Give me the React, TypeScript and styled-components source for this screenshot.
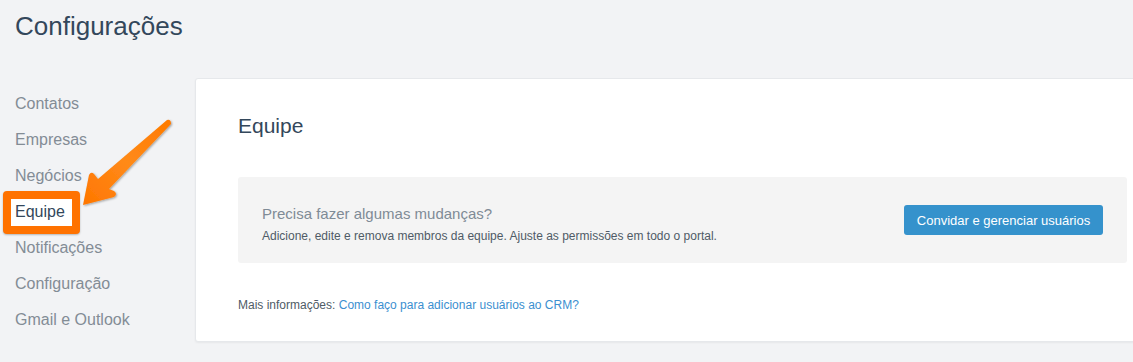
import React from 'react'
import styled, { createGlobalStyle } from 'styled-components'

const GlobalStyle = createGlobalStyle`
    html, body {
        margin: 0;
        padding: 0;
        background: #f2f3f5;
        overflow: hidden;
    }
    body {
        font-family: 'Liberation Sans', Arial, sans-serif;
        color: #33475b;
    }
`

const Page = styled.div`
    position: relative;
    width: 1133px;
    height: 362px;
    overflow: hidden;
`

const Title = styled.h1`
    margin: 0;
    padding: 10px 15px 0;
    height: 78px;
    box-sizing: border-box;
    font-size: 26px;
    font-weight: 400;
    line-height: 32px;
    color: #33475b;
`

const Main = styled.div`
    display: flex;
    align-items: flex-start;
`

const Sidebar = styled.nav`
    width: 195px;
    flex: none;
    padding-top: 8px;
`

const NavItem = styled.div<{ active?: boolean }>`
    position: relative;
    padding-left: 15px;
    height: 36px;
    line-height: 36px;
    font-size: 16px;
    color: ${(props) => (props.active ? '#33475b' : '#838c95')};
    z-index: 1;

    ${(props) =>
        props.active &&
        `
        &:before {
            content: '';
            position: absolute;
            left: 3px;
            top: -3px;
            width: 77px;
            height: 43px;
            box-sizing: border-box;
            border: 8px solid #ff7200;
            border-radius: 4px;
            background: #fff;
            z-index: -1;
            box-shadow: 0 1px 2px rgba(0, 0, 0, 0.25);
        }
    `}
`

const Card = styled.section`
    flex: none;
    width: 975px;
    height: 264px;
    box-sizing: border-box;
    background: #fff;
    border: 1px solid #e6e8eb;
    border-radius: 3px;
    box-shadow: 0 1px 2px rgba(0, 0, 0, 0.05);
    padding: 34px 42px 0;
`

const CardTitle = styled.h2`
    margin: 0;
    font-size: 21px;
    font-weight: 400;
    line-height: 26px;
    color: #33475b;
`

const Notice = styled.div`
    margin-top: 38px;
    height: 86px;
    box-sizing: border-box;
    background: #f4f4f4;
    border-radius: 3px;
    display: flex;
    align-items: center;
    justify-content: space-between;
    padding: 0 24px;
`

const NoticeText = styled.div`
    display: flex;
    flex-direction: column;
    gap: 5px;
    padding-top: 8px;
`

const NoticeTitle = styled.div`
    font-size: 15px;
    line-height: 18px;
    color: #7f8b96;
`

const NoticeSub = styled.div`
    font-size: 12px;
    line-height: 16px;
    color: #4f5b66;
`

const Button = styled.button`
    font-family: 'Liberation Sans', Arial, sans-serif;
    font-size: 13px;
    color: #fff;
    background: #3592cc;
    border: none;
    border-radius: 3px;
    width: 199px;
    height: 30px;
    padding: 0;
    cursor: pointer;
`

const MoreInfo = styled.p`
    margin: 34px 0 0;
    font-size: 12px;
    line-height: 16px;
    color: #4f5b66;
`

const Link = styled.a`
    color: #3b8fd0;
    text-decoration: none;
`

const Arrow = styled.svg`
    position: absolute;
    left: 0;
    top: 0;
    pointer-events: none;
    z-index: 2;
`

const navItems = [
    'Contatos',
    'Empresas',
    'Negócios',
    'Equipe',
    'Notificações',
    'Configuração',
    'Gmail e Outlook',
]

export default function App() {
    return (
        <>
            <GlobalStyle />
            <Page>
                <Title>Configurações</Title>
                <Main>
                    <Sidebar>
                        {navItems.map((item) => (
                            <NavItem key={item} active={item === 'Equipe'}>
                                {item}
                            </NavItem>
                        ))}
                    </Sidebar>
                    <Card>
                        <CardTitle>Equipe</CardTitle>
                        <Notice>
                            <NoticeText>
                                <NoticeTitle>Precisa fazer algumas mudanças?</NoticeTitle>
                                <NoticeSub>
                                    Adicione, edite e remova membros da equipe. Ajuste as
                                    permissões em todo o portal.
                                </NoticeSub>
                            </NoticeText>
                            <Button>Convidar e gerenciar usuários</Button>
                        </Notice>
                        <MoreInfo>
                            Mais informações:{' '}
                            <Link href="#">Como faço para adicionar usuários ao CRM?</Link>
                        </MoreInfo>
                    </Card>
                </Main>
                <Arrow width="200" height="240" viewBox="0 0 200 240">
                    <defs>
                        <linearGradient id="arrowFill" x1="0" y1="1" x2="1" y2="0">
                            <stop offset="0" stopColor="#ff7600" />
                            <stop offset="0.5" stopColor="#ff8a18" />
                            <stop offset="1" stopColor="#ff7a00" />
                        </linearGradient>
                        <filter id="arrowShadow" x="-20%" y="-20%" width="140%" height="140%">
                            <feDropShadow dx="1" dy="1" stdDeviation="1" floodColor="#000" floodOpacity="0.35" />
                        </filter>
                    </defs>
                    <path
                        d="M83 205 L89 175 Q91 171 94 174 L98 179 L167 120 Q171 119 171 124 L109 189 L114 191 Q118 194 114 197 Z"
                        fill="url(#arrowFill)"
                        filter="url(#arrowShadow)"
                    />
                </Arrow>
            </Page>
        </>
    )
}
